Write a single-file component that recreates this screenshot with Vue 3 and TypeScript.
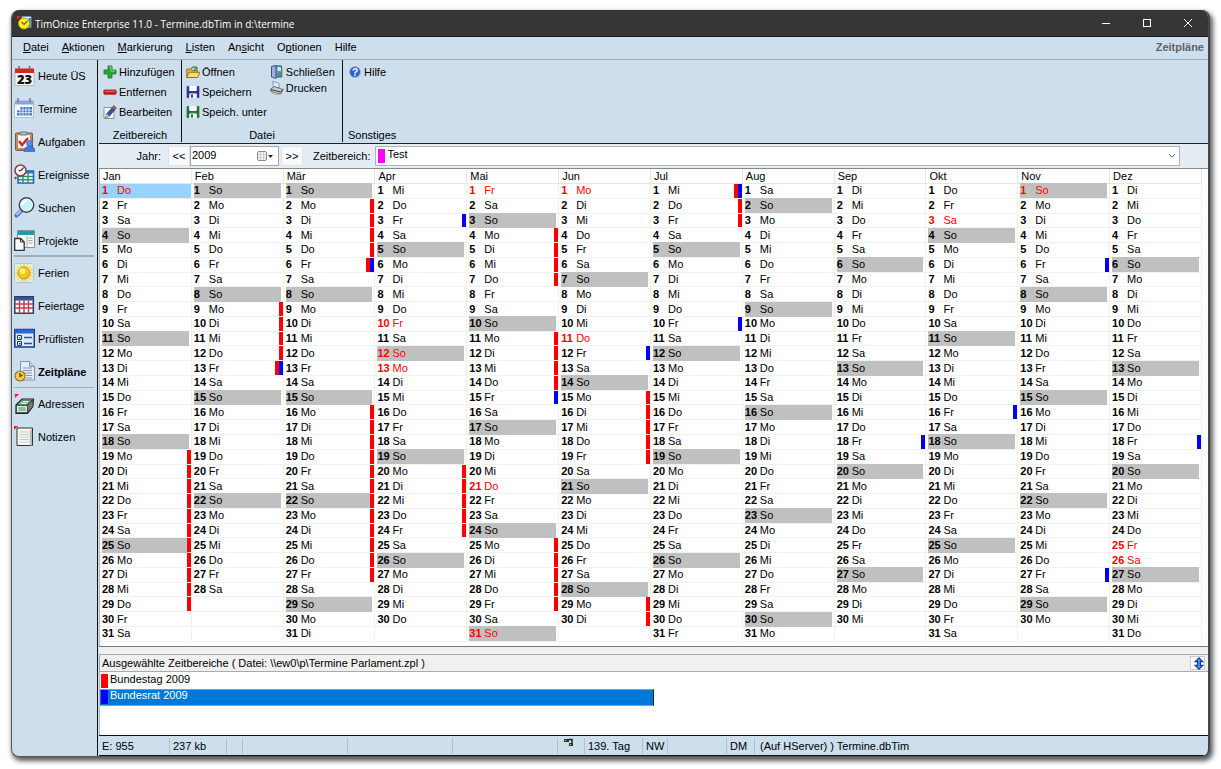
<script setup lang="ts">
import { computed, ref } from 'vue'

interface Range { month: number; from: number; to: number; kind: 'red' | 'blue' }
interface Cell { day: number; name: string; sunday: boolean; holiday: boolean; marks: string[] }
interface NavItem { label: string; icon: string }
interface Command { label: string; icon: string }

const icons: Record<string, string> = {
  today: '<path d="M1 6h19v13.500H1z" fill="#fbfbfb" stroke="#b5b5b5"/><path d="M1 2.500h19v4.500H1z" fill="#d8231c"/><path d="M5 0v4.500M15.500 0v4.500" stroke="#666" stroke-width="1.500"/><text x="10.500" y="17.500" text-anchor="middle" font-family="Open Sans, sans-serif" font-size="13" font-weight="800" fill="#111">23</text>',
  events: '<path d="M.5 4.500h19v15H.5z" fill="#f5f6f8" stroke="#b8bec8"/><path d="M1 2.500h18.500v4H1z" fill="#87a5dd"/><path d="M4 0v4M16 0v4" stroke="#777" stroke-width="1.500"/><path d="M6 9h12v3H6zM3 12h15v5.500H3z" fill="#3f73c4"/><path d="M6 9v9M9 9v9M12 9v9M15 9v9M3 12h15M3 14.700h15" stroke="#e4eefb" stroke-width=".9"/>',
  tasks: '<rect x="1.500" y="2" width="17" height="17.500" rx="1" fill="#b98a69" stroke="#84583e"/><path d="M4 4h12v13H4z" fill="#f7f7f7"/><path d="M6 1h7v3H6z" fill="#bbb" stroke="#777"/><path d="M5 10l3 4 6-7" fill="none" stroke="#d32620" stroke-width="2.400"/><circle cx="15.500" cy="12.500" r="3" fill="#5b91ea" stroke="#2859aa" stroke-width=".6"/><path d="M10 20.500c0-4 2-5 5.500-5s5.500 1 5.500 5z" fill="#3f7be0" stroke="#2859aa" stroke-width=".6"/>',
  incidents: '<path d="M4 7h15.500v12H4z" fill="#fff" stroke="#2763b8" stroke-width="1.600"/><path d="M4 6.500h15.500v3H4z" fill="#2f6fd0"/><path d="M4 12.500h15M4 15.700h15M9 9v10M14 9v10" stroke="#22956d" stroke-width="1.400"/><circle cx="6.500" cy="6.500" r="5.500" fill="#f2f8fb" stroke="#963a3a" stroke-width="1.500"/><path d="M6.500 7l3-3.500M6.500 7L4.500 6" stroke="#444" stroke-width="1.200"/><path d="M2 13l-1 2" stroke="#963a3a" stroke-width="2"/>',
  search: '<path d="M7.500 13.500L2.500 18.500" stroke="#4f6fc6" stroke-width="4" stroke-linecap="round"/><path d="M7 13.500L2.500 18" stroke="#b9c9f6" stroke-width="2"/><circle cx="12.500" cy="8" r="7.200" fill="#c5effb" stroke="#3e464c" stroke-width="1.500"/><circle cx="12.500" cy="8" r="5.800" fill="none" stroke="#eefaff"/><path d="M9 8c0-2 1-4 3.500-4" fill="none" stroke="#fff" stroke-width="2"/>',
  projects: '<path d="M3.500.5h17v17h-17z" fill="#f7f7f7" stroke="#8c9296"/><path d="M4 1h16v4H4z" fill="#1c9ca5"/><path d="M13 6v11" stroke="#aaa"/><path d="M14.500 8h4M14.500 10.500h4M14.500 13h4" stroke="#a5a5a5"/><path d="M.7 8.500h6l3.500 3.500v8.500H.7z" fill="#fff" stroke="#333" stroke-width="1.300"/><path d="M6.500 8.500V12H10" fill="none" stroke="#333"/>',
  vacation: '<rect x=".5" y=".5" width="19" height="19" rx="1" fill="#e9efc9" stroke="#a8c7ee"/><path d="M10 .800v18.400M.8 10h18.400M3 3l14 14M17 3L3 17M6.500 1.500l7 17M13.500 1.500l-7 17M1.500 6.500l17 7M1.500 13.500l17-7" stroke="#f0cd42" stroke-width="1"/><circle cx="10" cy="10" r="6" fill="#f7c516" stroke="#c99412"/><circle cx="8.500" cy="8" r="3" fill="#ffee77"/>',
  holidays: '<path d="M.8 1.800h18.500v16.500H.8z" fill="#fff" stroke="#243f78" stroke-width="1.500"/><path d="M1 2h18v3.500H1z" fill="#31549f"/><path d="M1 9h18M1 13h18M5.500 5v13M10 5v13M14.500 5v13" stroke="#c63d4c" stroke-width="1.500"/>',
  lists: '<path d="M.8 1.500h19.500v17.500H.8z" fill="#dbeafc" stroke="#173d92" stroke-width="1.600"/><path d="M1 1.500h19v4H1z" fill="#2e67d0"/><path d="M3.500 7.500h4v4h-4zM3.500 13.500h4v4h-4z" fill="#fff" stroke="#173d50"/><path d="M5 9h1.500v1.500H5z" fill="#159b38"/><path d="M5 15h1.500v1.500H5z" fill="#222"/><path d="M10 9.500h8M10 15.500h8" stroke="#2555a7" stroke-width="1.700"/>',
  plans: '<path d="M6.500.5h9l5 5v13.500h-14z" fill="#e6edfa" stroke="#7f91bb"/><path d="M15.500.5v5h5" fill="#bccbe9" stroke="#7f91bb"/><path d="M9 7h9M9 9.500h9M9 12h9M12 14.500h6M12 17h6" stroke="#8797ba"/><circle cx="6" cy="15" r="5" fill="#f5c94d" stroke="#987325" stroke-width="1.200"/><path d="M6 12v3.500l2.500-1.500" fill="none" stroke="#4a3a17" stroke-width="1.200"/>',
  addresses: '<path d="M1 0h4L1 4z" fill="#f11"/><path d="M2 11l6-6h11.500l-1 8-5 6.500H2z" fill="#f4f4f4" stroke="#222" stroke-width="1.200"/><path d="M7.500 6h10.500l-5 5H3z" fill="#7fbf93" stroke="#333" stroke-width=".8"/><path d="M9 7.500h5M7 9.500h5" stroke="#fff" stroke-width="1.200"/><path d="M13.500 11.500l5.500-6v7l-5.500 6z" fill="#777" stroke="#222" stroke-width=".8"/><path d="M2.500 11.500h11v7h-11z" fill="#d5ebdd" stroke="#333" stroke-width=".8"/><path d="M4.500 14h7M4.500 16h7" stroke="#379256" stroke-width="1.200"/>',
  notes: '<path d="M3 2h15.500v17.500H3z" fill="#f7f7f5" stroke="#333"/><path d="M17 3.500v16" stroke="#bbb" stroke-width="2"/><path d="M5.500 6h10M5.500 8.500h10M5.500 11h10M5.500 13.500h10M5.500 16h10" stroke="#c9c9c9"/><path d="M0 0h4L0 4z" fill="#f11"/>',
  add: '<path d="M5 1h4v4h4v4H9v4H5V9H1V5h4z" fill="#2ca43a" stroke="#187324" stroke-width=".8"/><path d="M6 2h2v4h4" fill="none" stroke="#85db7c"/>',
  remove: '<rect x=".8" y="5" width="12.400" height="4.300" rx="1" fill="#c61e1e" stroke="#911" stroke-width=".7"/><path d="M2 6.300h10" stroke="#ee7269"/>',
  edit: '<path d="M1 2.500h10v11H1z" fill="#f8f8fa" stroke="#8190ab"/><path d="M10.800.700l2.500 2.200L6.500 11l-4 2 1.300-4.300z" fill="#3657a5" stroke="#20335f" stroke-width=".7"/><path d="M10.800.700l2.500 2.200L11.800 4.800 9.200 2.500z" fill="#bb543f"/><path d="M3.800 9l2.400 2-3.700 2z" fill="#e9c28f"/>',
  open: '<path d="M.8 12.500V4h4l1 1.500h5.700v7z" fill="#edb13b" stroke="#987020"/><path d="M.8 12.500l2.500-5.200H14l-2.500 5.200z" fill="#ffdc78" stroke="#987020"/><path d="M5 3.500C6 1 9 .800 10 2.500V1l2 3-3.500.700L9.300 3.500C8 2.500 7 2.500 5 3.500z" fill="#58a858" stroke="#317a38" stroke-width=".5"/>',
  save: '<path d="M1 1.500h2v11H1zM11 1.500h2v11h-2zM2.500 6h9v2.500h-9z" fill="#3b3ba8" stroke="#25257b" stroke-width=".6"/><path d="M3.500 1h7v5h-7z" fill="#fff"/><path d="M3.500 8.500h7.200v4.500H3.500z" fill="#f0f0f8"/><path d="M5 9.500h2v3H5z" fill="#33338a"/>',
  saveas: '<path d="M1 1.500h2v11H1zM11 1.500h2v11h-2zM2.500 6h9v2.500h-9z" fill="#25883a" stroke="#145d28" stroke-width=".6"/><path d="M3.500 1h7v5h-7z" fill="#fff"/><path d="M3.500 8.500h7.200v4.500H3.500z" fill="#f0f8f1"/><path d="M5 9.500h2v3H5z" fill="#1e6631"/>',
  close: '<path d="M4.500 1h7v11h-7z" fill="#4f98d6" stroke="#3a4b80"/><path d="M1.500 1.500L6 .5v13l-4.500-1.500z" fill="#a3acd8" stroke="#4b4e83"/><path d="M7.500 2h3.500v4H7.500z" fill="#cde7fa"/><path d="M8 7h3v4H8z" fill="#44a24a"/><path d="M12 3v9" stroke="#999"/>',
  print: '<path d="M2.500.5l6 1.500 1 5-6-1z" fill="#d8eefc" stroke="#758faa" stroke-width=".8"/><path d="M.8 8L4 5.500l9.200 3-2.500 4.500L.8 10.500z" fill="#ccc" stroke="#555" stroke-width=".8"/><path d="M1 8.500l9.500 2.500 2.500-2.500" fill="none" stroke="#333"/><path d="M3 11l6 2-1 1-6-2z" fill="#fff" stroke="#777" stroke-width=".6"/>',
  help: '<circle cx="7" cy="7" r="5.500" fill="#2c63c8" stroke="#9bb8e5"/><text x="7" y="10.500" text-anchor="middle" font-family="Liberation Sans, sans-serif" font-size="10" font-weight="700" fill="#fff">?</text>',
}

const menus = [
  { before: '', key: 'D', after: 'atei' },
  { before: '', key: 'A', after: 'ktionen' },
  { before: '', key: 'M', after: 'arkierung' },
  { before: '', key: 'L', after: 'isten' },
  { before: 'An', key: 's', after: 'icht' },
  { before: 'O', key: 'p', after: 'tionen' },
  { before: '', key: '', after: 'Hilfe' },
]

const navGroups: NavItem[][] = [
  [
    { label: 'Heute ÜS', icon: 'today' },
    { label: 'Termine', icon: 'events' },
    { label: 'Aufgaben', icon: 'tasks' },
    { label: 'Ereignisse', icon: 'incidents' },
    { label: 'Suchen', icon: 'search' },
    { label: 'Projekte', icon: 'projects' },
  ],
  [
    { label: 'Ferien', icon: 'vacation' },
    { label: 'Feiertage', icon: 'holidays' },
    { label: 'Prüflisten', icon: 'lists' },
    { label: 'Zeitpläne', icon: 'plans' },
  ],
  [
    { label: 'Adressen', icon: 'addresses' },
    { label: 'Notizen', icon: 'notes' },
  ],
]
const activeNav = ref('Zeitpläne')

const ribbon: { title: string; cls: string; columns: Command[][] }[] = [
  {
    title: 'Zeitbereich',
    cls: 'range',
    columns: [[
      { label: 'Hinzufügen', icon: 'add' },
      { label: 'Entfernen', icon: 'remove' },
      { label: 'Bearbeiten', icon: 'edit' },
    ]],
  },
  {
    title: 'Datei',
    cls: 'file',
    columns: [
      [
        { label: 'Öffnen', icon: 'open' },
        { label: 'Speichern', icon: 'save' },
        { label: 'Speich. unter', icon: 'saveas' },
      ],
      [
        { label: 'Schließen', icon: 'close' },
        { label: 'Drucken', icon: 'print' },
      ],
    ],
  },
  { title: 'Sonstiges', cls: 'misc', columns: [[{ label: 'Hilfe', icon: 'help' }]] },
]

const year = ref(2009)
const area = ref('Test')
const months = ['Jan', 'Feb', 'Mär', 'Apr', 'Mai', 'Jun', 'Jul', 'Aug', 'Sep', 'Okt', 'Nov', 'Dez']
const weekdays = ['So', 'Mo', 'Di', 'Mi', 'Do', 'Fr', 'Sa']
const holidays = ['1-1', '4-10', '4-12', '4-13', '5-1', '5-21', '5-31', '6-1', '6-11', '10-3', '11-1', '12-25', '12-26']
const selected = ref('1-1')

const ranges: Range[] = [
  { month: 1, from: 19, to: 29, kind: 'red' },
  { month: 2, from: 9, to: 13, kind: 'red' },
  { month: 2, from: 13, to: 13, kind: 'blue' },
  { month: 3, from: 2, to: 6, kind: 'red' },
  { month: 3, from: 6, to: 6, kind: 'blue' },
  { month: 3, from: 16, to: 27, kind: 'red' },
  { month: 4, from: 3, to: 3, kind: 'blue' },
  { month: 4, from: 20, to: 24, kind: 'red' },
  { month: 5, from: 4, to: 7, kind: 'red' },
  { month: 5, from: 11, to: 14, kind: 'red' },
  { month: 5, from: 15, to: 15, kind: 'blue' },
  { month: 5, from: 25, to: 29, kind: 'red' },
  { month: 6, from: 12, to: 12, kind: 'blue' },
  { month: 6, from: 15, to: 19, kind: 'red' },
  { month: 6, from: 29, to: 30, kind: 'red' },
  { month: 7, from: 1, to: 3, kind: 'red' },
  { month: 7, from: 1, to: 1, kind: 'blue' },
  { month: 7, from: 10, to: 10, kind: 'blue' },
  { month: 9, from: 18, to: 18, kind: 'blue' },
  { month: 10, from: 16, to: 16, kind: 'blue' },
  { month: 11, from: 6, to: 6, kind: 'blue' },
  { month: 11, from: 27, to: 27, kind: 'blue' },
  { month: 12, from: 18, to: 18, kind: 'blue' },
]

const rows = computed<(Cell | null)[][]>(() =>
  Array.from({ length: 31 }, (_, r) =>
    months.map((_, m) => {
      const day = r + 1
      const date = new Date(year.value, m, day)
      if (date.getMonth() !== m) return null
      return {
        day,
        name: weekdays[date.getDay()],
        sunday: date.getDay() === 0,
        holiday: holidays.includes(`${m + 1}-${day}`),
        marks: ranges.filter(x => x.month === m + 1 && x.from <= day && x.to >= day).map(x => x.kind),
      }
    }),
  ),
)

const lists = [
  { label: 'Bundestag 2009', kind: 'red' },
  { label: 'Bundesrat 2009', kind: 'blue' },
]
const activeList = ref('Bundesrat 2009')
</script>

<template>
  <div class="desktop">
    <div class="window">
      <header class="titlebar">
        <svg class="logo" viewBox="0 0 16 16" aria-hidden="true">
          <path d="M5 1.500h9v11H5z" fill="#e8f2fb" stroke="#7395b8" />
          <path d="M12.500 3v9" stroke="#3579c8" stroke-width="2" />
          <path d="M0 1h4L0 5z" fill="#e22" />
          <circle cx="7" cy="8.500" r="5.500" fill="#ffec21" stroke="#b5a100" />
          <path d="M4.500 7L7 9.500 10.500 6" fill="none" stroke="#6b6310" stroke-width="1.200" />
        </svg>
        <h1>TimOnize Enterprise 11.0 - Termine.dbTim in d:\termine</h1>
        <div class="controls">
          <button type="button" aria-label="Minimieren"><svg viewBox="0 0 10 10"><path d="M1 5.500h8" /></svg></button>
          <button type="button" aria-label="Maximieren"><svg viewBox="0 0 10 10"><rect x="1.500" y="1.500" width="7" height="7" /></svg></button>
          <button type="button" aria-label="Schließen"><svg viewBox="0 0 10 10"><path d="M1 1l8 8M9 1L1 9" /></svg></button>
        </div>
      </header>

      <nav class="menubar">
        <button v-for="m in menus" :key="m.after" type="button">{{ m.before }}<u v-if="m.key">{{ m.key }}</u>{{ m.after }}</button>
        <strong>Zeitpläne</strong>
      </nav>

      <div class="body">
        <aside class="sidebar">
          <div v-for="(g, i) in navGroups" :key="i" class="nav-group">
            <button v-for="n in g" :key="n.label" type="button" :class="{ active: n.label === activeNav }" @click="activeNav = n.label">
              <svg viewBox="0 0 21 21" aria-hidden="true" v-html="icons[n.icon]"></svg>{{ n.label }}
            </button>
          </div>
        </aside>

        <main>
          <section class="ribbon">
            <div v-for="g in ribbon" :key="g.title" class="ribbon-group" :class="g.cls">
              <div class="ribbon-columns">
                <div v-for="(c, i) in g.columns" :key="i" class="ribbon-column">
                  <button v-for="b in c" :key="b.label" type="button">
                    <svg viewBox="0 0 14 14" aria-hidden="true" v-html="icons[b.icon]"></svg>{{ b.label }}
                  </button>
                </div>
              </div>
              <div class="ribbon-title">{{ g.title }}</div>
            </div>
          </section>

          <section class="filter">
            <label class="year-label" for="year">Jahr:</label>
            <button class="step" type="button" aria-label="Vorheriges Jahr" @click="year--">&lt;&lt;</button>
            <div class="year-box">
              <input id="year" v-model.number="year" type="text">
              <button type="button" aria-label="Kalender öffnen">
                <svg viewBox="0 0 16 11"><rect x=".5" y=".5" width="9" height="9" rx="1.500" fill="#f4f4f4" stroke="#8a8a8a" /><path d="M1 3.500h8M1 6.500h8M3.500 1v8M6.500 1v8" stroke="#d0d0d0" /><path d="M11 4h5l-2.500 3z" fill="#222" /></svg>
              </button>
            </div>
            <button class="step next" type="button" aria-label="Nächstes Jahr" @click="year++">&gt;&gt;</button>
            <label class="area-label" for="area">Zeitbereich:</label>
            <div class="area-box">
              <select id="area" v-model="area"><option>Test</option></select>
              <span class="area-color"></span>
              <svg viewBox="0 0 8 5"><path d="M1 1l3 3 3-3" fill="none" stroke="#777" /></svg>
            </div>
          </section>

          <section class="calendar">
            <table>
              <thead>
                <tr><th v-for="m in months" :key="m" scope="col">{{ m }}</th></tr>
              </thead>
              <tbody>
                <tr v-for="(row, r) in rows" :key="r">
                  <td v-for="(c, m) in row" :key="m" :class="{ picked: selected === `${m + 1}-${r + 1}` }" @click="selected = `${m + 1}-${r + 1}`">
                    <div v-if="c" class="day" :class="{ sunday: c.sunday, holiday: c.holiday }">
                      <b>{{ c.day }}</b><span>{{ c.name }}</span>
                    </div>
                    <div v-if="c && c.marks.length" class="marks"><i v-for="k in c.marks" :key="k" :class="k"></i></div>
                  </td>
                </tr>
              </tbody>
            </table>
          </section>

          <section class="selection">
            <div class="selection-head">
              <h2>Ausgewählte Zeitbereiche ( Datei: \\ew0\p\Termine Parlament.zpl )</h2>
              <button type="button" aria-label="Bereich vergrößern">
                <svg viewBox="0 0 10 14"><path d="M5 1l4 4H6.500v4H9l-4 4-4-4h2.500V5H1z" fill="#4aa0f5" stroke="#14349b" stroke-width="1.300" /></svg>
              </button>
            </div>
            <ul role="listbox" aria-label="Ausgewählte Zeitbereiche">
              <li v-for="l in lists" :key="l.label" role="option" :aria-selected="l.label === activeList" :class="{ chosen: l.label === activeList }" @click="activeList = l.label">
                <i :class="l.kind"></i>{{ l.label }}
              </li>
            </ul>
          </section>

          <footer class="status">
            <span class="s-count">E: 955</span>
            <span class="s-size">237 kb</span>
            <span class="s-tiny"></span>
            <span class="s-wide"></span>
            <span class="s-wide"></span>
            <span class="s-wide"></span>
            <span class="s-icon"><svg viewBox="0 0 10 9"><path d="M0 1h5v3H0zM5 5h4v3H5z" fill="#333" /><path d="M5 1.500h3V5" fill="none" stroke="#222" stroke-width="1.500" /><path d="M1 2h1v1H1zM6 6h1v1H6z" fill="#f1e34a" /></svg></span>
            <span class="s-day">139. Tag</span>
            <span class="s-nw">NW</span>
            <span class="s-gap"></span>
            <span class="s-dm">DM</span>
            <span class="s-file">(Auf HServer) ) Termine.dbTim</span>
          </footer>
        </main>
      </div>
    </div>
  </div>
</template>

<style>
body {
  margin: 0;
  background: #fff;
}
</style>

<style scoped>
* {
  box-sizing: border-box;
}
.desktop {
  height: 100vh;
  padding: 10px 11px 12px;
  display: flex;
  font: 11px/14px "Liberation Sans", Arial, sans-serif;
  color: #000;
}
button {
  font: inherit;
  color: inherit;
  background: none;
  border: 0;
  padding: 0;
  display: flex;
  align-items: center;
  white-space: nowrap;
}
.window {
  flex: 1;
  min-width: 0;
  display: flex;
  flex-direction: column;
  border: 1px solid #55595d;
  border-top: 0;
  border-right: 2px solid #44474a;
  border-radius: 8px;
  overflow: hidden;
  background: #cddeec;
  box-shadow: 2px 3px 5px 1px rgba(0, 0, 0, 0.65);
}
.titlebar {
  height: 27px;
  flex: none;
  display: flex;
  align-items: center;
  background: #363636;
  border-bottom: 1px solid #1a1a1a;
  color: #fff;
  padding-left: 5px;
}
.logo {
  width: 16px;
  height: 16px;
  margin-right: 2px;
}
h1 {
  flex: 1;
  margin: 0;
  padding-top: 1px;
  font: 10px/16px "Open Sans", "Noto Sans", sans-serif;
}
.controls {
  display: flex;
}
.controls button {
  width: 41px;
  height: 26px;
  justify-content: center;
}
.controls svg {
  width: 10px;
  height: 10px;
  fill: none;
  stroke: #fff;
}
.menubar {
  height: 23px;
  flex: none;
  display: flex;
  align-items: center;
  gap: 1px;
  padding: 0 4px 2px 5px;
  border-bottom: 1px solid #a3adb5;
}
.menubar button {
  padding: 0 6px;
  display: block;
}
.menubar strong {
  margin-left: auto;
  color: #606468;
}
.body {
  flex: 1;
  min-height: 0;
  display: flex;
}
.sidebar {
  width: 86px;
  flex: none;
  border-right: 1px solid #111;
}
.nav-group {
  position: relative;
}
.nav-group:not(:last-child)::after {
  content: "";
  position: absolute;
  left: 2px;
  right: 3px;
  bottom: 0;
  height: 1px;
  background: #a3adb6;
}
.nav-group:first-child::after {
  height: 2px;
}
.nav-group button {
  width: 100%;
  height: 33px;
  padding-left: 2px;
  gap: 3px;
}
.nav-group button:first-child {
  height: 32px;
}
.nav-group button.active {
  font-weight: 700;
}
.nav-group svg {
  width: 21px;
  height: 21px;
  flex: none;
}
main {
  flex: 1;
  min-width: 0;
  display: flex;
  flex-direction: column;
  padding-left: 1px;
}
.ribbon {
  height: 84px;
  flex: none;
  display: flex;
  border-bottom: 1px solid #222;
}
.ribbon-group {
  display: flex;
  flex-direction: column;
  justify-content: space-between;
  padding: 2px 0 0 4px;
  border-right: 1px solid #111;
  margin-bottom: 1px;
}
.ribbon-group.range {
  width: 83px;
}
.ribbon-group.file {
  width: 161px;
}
.ribbon-group.misc {
  border: 0;
  padding-left: 5px;
}
.ribbon-columns {
  display: flex;
  gap: 3px;
}
.ribbon-column button {
  height: 20px;
  gap: 2px;
}
.ribbon-column + .ribbon-column button + button {
  height: 12px;
}
.ribbon-column svg {
  width: 14px;
  height: 14px;
  flex: none;
}
.ribbon-title {
  text-align: center;
}
.range .ribbon-title,
.file .ribbon-title {
  padding-right: 4px;
}
.filter {
  height: 25px;
  flex: none;
  display: flex;
  align-items: center;
  background: #e5edf4;
  border-bottom: 1px solid #888;
}
.year-label {
  width: 62px;
  text-align: right;
  margin-right: 7px;
}
.step {
  width: 22px;
  height: 20px;
  justify-content: center;
  background: #f7f8fa;
  border: 1px solid #dde3e8;
}
.step.next {
  margin-left: 2px;
}
.year-box {
  width: 89px;
  height: 20px;
  display: flex;
  align-items: center;
  background: #fff;
  border: 1px solid #a8a8a8;
}
.year-box input {
  flex: 1;
  min-width: 0;
  border: 0;
  padding: 0 0 2px 1px;
  font: inherit;
  outline: 0;
}
.year-box svg {
  width: 16px;
  height: 11px;
  margin-right: 5px;
}
.area-label {
  margin: 0 5px 0 10px;
}
.area-box {
  position: relative;
  flex: 1;
  height: 20px;
  margin-right: 28px;
}
.area-box select {
  width: 100%;
  height: 100%;
  appearance: none;
  border: 1px solid #b3b3b3;
  border-radius: 0;
  background: #fff;
  color: #000;
  font: inherit;
  padding: 0 0 4px 11px;
}
.area-color {
  position: absolute;
  left: 3px;
  top: 3px;
  width: 7px;
  height: 14px;
  background: #f0f;
}
.area-box svg {
  position: absolute;
  right: 4px;
  top: 7px;
  width: 8px;
  height: 5px;
}
.calendar {
  flex: 1;
  min-height: 0;
  background: #fff;
  padding: 0 6px 4px 0;
  border-left: 1px solid #bbb;
}
table {
  width: 100%;
  height: 100%;
  table-layout: fixed;
  border-collapse: separate;
  border-spacing: 0;
}
th {
  height: 15px;
  padding: 0 0 0 3px;
  text-align: left;
  font-weight: 400;
  line-height: 14px;
  border-right: 1px solid #e6e6e6;
  border-bottom: 1px solid #e6e6e6;
}
td {
  position: relative;
  padding: 0 2px;
  line-height: 13px;
  border-right: 1px solid #f1f1f1;
  border-bottom: 1px solid #f1f1f1;
}
td.picked {
  background: #99d1ff;
}
.day {
  display: flex;
}
.day b {
  width: 15px;
}
.day.sunday {
  background: #c0c0c0;
  box-shadow: 0 -1px #c0c0c0, 0 1px #c0c0c0;
}
.day.holiday {
  color: #f00;
}
.marks {
  position: absolute;
  right: 0;
  top: 0;
  bottom: 0;
  display: flex;
}
.marks i {
  width: 4px;
}
.red {
  background: #f00;
}
.blue {
  background: #00f;
}
.selection {
  height: 90px;
  flex: none;
  display: flex;
  flex-direction: column;
  background: #f0f0f0;
  border-top: 1px solid #777;
  border-bottom: 1px solid #111;
  padding-top: 7px;
}
.selection-head {
  height: 18px;
  flex: none;
  display: flex;
  align-items: center;
  justify-content: space-between;
  border: 1px solid #aaa;
  border-right: 0;
  padding: 0 3px 0 2px;
}
h2 {
  margin: 0;
  font: inherit;
}
.selection-head button {
  width: 15px;
  height: 14px;
  justify-content: flex-end;
  background: #fff;
  border: 1px solid #ccc;
}
.selection-head svg {
  width: 10px;
  height: 13px;
  flex: none;
}
.selection ul {
  flex: 1;
  margin: 0;
  padding: 1px 0 0;
  list-style: none;
  background: #fff;
  border-left: 1px solid #bbb;
}
.selection li {
  width: 50%;
  height: 16px;
  display: flex;
  gap: 2px;
  line-height: 11px;
  padding: 1px 1px 0;
}
.selection li i {
  width: 7px;
  height: 14px;
}
.selection li.chosen {
  height: 17px;
  background: #0078d7;
  color: #fff;
  border: 1px solid #c98a58;
  border-left: 0;
  border-right: 1px solid #123;
  padding-top: 0;
}
.status {
  height: 20px;
  flex: none;
  display: flex;
  align-items: center;
  border-bottom: 1px solid #111;
}
.status span {
  height: 16px;
  line-height: 17px;
  flex: none;
  padding-left: 3px;
  border-right: 1px solid #b3bfc9;
  white-space: nowrap;
}
.status .s-count { width: 71px; }
.status .s-size { width: 57px; }
.status .s-tiny { width: 16px; }
.status .s-wide { width: 105px; }
.status .s-icon { width: 27px; padding-left: 6px; }
.status .s-icon svg { display: block; width: 10px; height: 9px; }
.status .s-day { width: 58px; }
.status .s-nw { width: 25px; }
.status .s-gap { width: 59px; }
.status .s-dm { width: 28px; }
.status .s-file { flex: 1; border: 0; padding-left: 5px; }
</style>
